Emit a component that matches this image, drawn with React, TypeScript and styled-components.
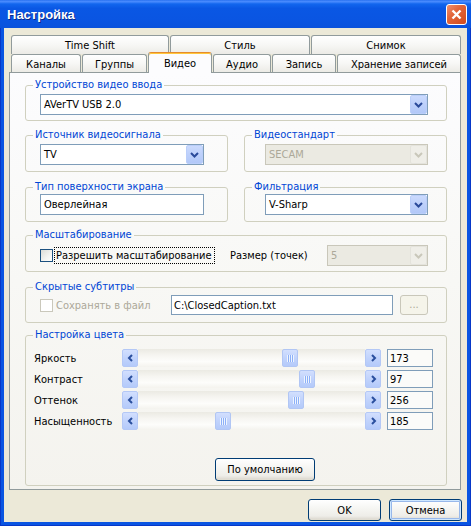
import React from "react";
import styled, { createGlobalStyle } from "styled-components";

const GlobalStyle = createGlobalStyle`
  html, body {
    margin: 0;
    padding: 0;
    background: #ffffff;
  }
  body {
    font-family: "DejaVu Sans Condensed", "DejaVu Sans", sans-serif;
    font-size: 11px;
    color: #000;
  }
  * {
    box-sizing: border-box;
  }
`;

const Window = styled.div`
  width: 471px;
  height: 526px;
  display: flex;
  flex-direction: column;
  background: #0a55e2;
  box-shadow: inset 1px 0 #0838c8, inset -1px 0 #0838c8, inset 0 -1px #0838c8;
`;

const TitleBar = styled.div`
  height: 28px;
  flex: none;
  display: flex;
  align-items: center;
  justify-content: space-between;
  padding: 0 4px 0 7px;
  background: linear-gradient(
    to bottom,
    #2a72f0 0%,
    #4a8cff 6%,
    #1266ee 14%,
    #0a57e4 30%,
    #0a55e2 70%,
    #0a52dc 100%
  );
`;

const Title = styled.span`
  font-family: "Liberation Sans", Arial, sans-serif;
  font-weight: bold;
  font-size: 13px;
  color: #ffffff;
  text-shadow: 1px 1px #0a2a8a;
`;

const CloseButton = styled.div`
  width: 21px;
  height: 21px;
  border: 1px solid #ffffff;
  border-radius: 3px;
  background: linear-gradient(135deg, #f09070 0%, #e2653a 40%, #d04a1c 100%);
  display: flex;
  align-items: center;
  justify-content: center;
`;

const Client = styled.div`
  flex: 1;
  margin: 0 4px 4px;
  background: #ece9d8;
  display: flex;
  flex-direction: column;
  padding: 7px 6px 0 5px;
`;

const TabRow = styled.div<{ $h: number }>`
  display: flex;
  align-items: flex-end;
  gap: 1px;
  height: ${({ $h }) => $h}px;
  padding-left: 2px;
`;

const Tab = styled.div<{ $w: number; $active?: boolean }>`
  width: ${({ $w }) => $w}px;
  height: ${({ $active }) => ($active ? "21px" : "100%")};
  margin-bottom: ${({ $active }) => ($active ? "-1px" : "0")};
  position: relative;
  z-index: ${({ $active }) => ($active ? 2 : 0)};
  display: flex;
  align-items: center;
  justify-content: center;
  border: 1px solid #919b9c;
  border-bottom: none;
  border-top-color: ${({ $active }) => ($active ? "#e68b2c" : "#919b9c")};
  border-radius: 3px 3px 0 0;
  background: ${({ $active }) =>
    $active
      ? "#fcfcfe"
      : "linear-gradient(to bottom, #ffffff 0%, #f7f7f5 50%, #ecebe6 100%)"};
  box-shadow: ${({ $active }) => ($active ? "inset 0 1px #ffc73c" : "none")};
  padding-top: ${({ $active }) => ($active ? "0" : "1px")};
`;

const Panel = styled.div`
  border: 1px solid #919b9c;
  background: linear-gradient(to bottom, #fcfcfe 0%, #f8f8f5 50%, #f4f3ee 100%);
  padding: 5px 13px 3px 15px;
  display: flex;
  flex-direction: column;
`;

const Pair = styled.div<{ $mt: number }>`
  display: grid;
  grid-template-columns: 203px 203px;
  column-gap: 16px;
  margin-top: ${({ $mt }) => $mt}px;
`;

const Group = styled.fieldset<{ $mt?: number }>`
  margin: ${({ $mt }) => $mt ?? 0}px 0 0 0;
  padding: 0;
  min-width: 0;
  border: 1px solid #d0d0bf;
  border-radius: 3px;
`;

const Legend = styled.legend`
  margin-left: 7px;
  padding: 0 2px;
  color: #0046d5;
  font-size: 11px;
  line-height: 14px;
`;

const GroupBody = styled.div<{ $pad: string }>`
  padding: ${({ $pad }) => $pad};
  display: flex;
  align-items: center;
`;

const Combo = styled.div<{ $w: number; $disabled?: boolean }>`
  width: ${({ $w }) => $w}px;
  height: 21px;
  display: flex;
  align-items: center;
  border: 1px solid ${({ $disabled }) => ($disabled ? "#c9c7ba" : "#7f9db9")};
  background: ${({ $disabled }) => ($disabled ? "#ebeae2" : "#ffffff")};
  color: ${({ $disabled }) => ($disabled ? "#aca899" : "#000")};
`;

const ComboText = styled.span`
  flex: 1;
  padding-left: 3px;
  white-space: nowrap;
`;

const DropButton = styled.div<{ $disabled?: boolean }>`
  width: 17px;
  height: 19px;
  display: flex;
  align-items: center;
  justify-content: center;
  border: 1px solid ${({ $disabled }) => ($disabled ? "#e4e3dc" : "#bacefa")};
  border-radius: 2px;
  background: ${({ $disabled }) =>
    $disabled
      ? "#efeee8"
      : "linear-gradient(to bottom, #cbdafd 0%, #bdd0fb 50%, #b2c8f8 100%)"};
`;

const TextBox = styled.div<{ $w: number; $h: number }>`
  width: ${({ $w }) => $w}px;
  height: ${({ $h }) => $h}px;
  display: flex;
  align-items: center;
  padding-left: 3px;
  border: 1px solid #7f9db9;
  background: #ffffff;
  white-space: nowrap;
`;

const CheckBox = styled.div<{ $disabled?: boolean }>`
  width: 13px;
  height: 13px;
  flex: none;
  border: 1px solid ${({ $disabled }) => ($disabled ? "#cac8bb" : "#1c5180")};
  background: ${({ $disabled }) =>
    $disabled ? "#ffffff" : "linear-gradient(135deg, #dcdcd7 0%, #f4f4f1 60%, #ffffff 100%)"};
`;

const CheckLabel = styled.span<{ $focus?: boolean; $disabled?: boolean }>`
  margin-left: 2px;
  padding: 1px 2px 1px 1px;
  line-height: 13px;
  outline: ${({ $focus }) => ($focus ? "1px dotted #000" : "none")};
  color: ${({ $disabled }) => ($disabled ? "#aca899" : "#000")};
  white-space: nowrap;
`;

const FieldLabel = styled.span<{ $w: number }>`
  width: ${({ $w }) => $w}px;
  margin-left: auto;
  white-space: nowrap;
`;

const SmallButton = styled.div`
  width: 28px;
  height: 20px;
  margin-left: 7px;
  border: 1px solid #c9c7ba;
  border-radius: 3px;
  background: #f5f4ea;
  color: #aca899;
  display: flex;
  align-items: center;
  justify-content: center;
  line-height: 10px;
`;

const ColorBody = styled.div`
  padding: 7px 0 4px 8px;
  display: flex;
  flex-direction: column;
`;

const SliderRow = styled.div`
  display: grid;
  grid-template-columns: 82px 259px 46px;
  column-gap: 6px;
  align-items: center;
  height: 18px;
  margin-bottom: 3px;
`;

const ScrollBar = styled.div`
  display: flex;
  height: 18px;
`;

const ScrollButton = styled.div`
  width: 16px;
  height: 18px;
  flex: none;
  display: flex;
  align-items: center;
  justify-content: center;
  border: 1px solid #b4c8f6;
  border-radius: 2px;
  background: linear-gradient(to bottom, #d2dffe 0%, #c1d3fc 50%, #b4cafa 100%);
`;

const Track = styled.div`
  flex: 1;
  display: flex;
  background: linear-gradient(
    to bottom,
    #ebeae3 0%,
    #f6f5f1 35%,
    #fdfdfb 70%,
    #f4f3ee 100%
  );
`;

const Thumb = styled.div`
  width: 16px;
  height: 18px;
  display: flex;
  align-items: center;
  justify-content: center;
  border: 1px solid #b1c6f4;
  border-radius: 2px;
  background: linear-gradient(to bottom, #d2dffe 0%, #c1d3fc 50%, #b4cafa 100%);
`;

const Grip = styled.div`
  width: 7px;
  height: 7px;
  background: repeating-linear-gradient(
    to right,
    #eef4fe 0 1px,
    #8cb0f8 1px 2px
  );
`;

const ValueBox = styled.div`
  height: 18px;
  border: 1px solid #7f9db9;
  padding-left: 2px;
  display: flex;
  align-items: center;
  background: #fbfbf9;
`;

const XpButton = styled.button<{ $w: number; $h: number; $focus?: boolean }>`
  width: ${({ $w }) => $w}px;
  height: ${({ $h }) => $h}px;
  padding: 0;
  font: inherit;
  font-size: 11px;
  color: #000;
  border: 1px solid #003c74;
  border-radius: 3px;
  background: linear-gradient(
    to bottom,
    #ffffff 0%,
    #f6f6f3 40%,
    #eeede8 80%,
    #d9d4ca 100%
  );
  box-shadow: ${({ $focus }) =>
    $focus
      ? "inset 0 0 0 1px #cee7ff, inset 0 0 0 2px #98b8ea"
      : "inset 0 -1px 0 #e0ddd2"};
`;

const DefaultButton = styled(XpButton)`
  margin: 25px 0 0 181px;
`;

const Footer = styled.div`
  display: flex;
  justify-content: flex-end;
  gap: 8px;
  margin: 9px -1px 0 0;
`;

function Chevron({ dir, color }: { dir: "down" | "left" | "right"; color: string }) {
  if (dir === "down") {
    return (
      <svg width="9" height="6" viewBox="0 0 9 6">
        <polyline points="1,1 4.5,4.5 8,1" fill="none" stroke={color} strokeWidth="2" />
      </svg>
    );
  }
  const pts = dir === "left" ? "5,1 2,4 5,7" : "2,1 5,4 2,7";
  return (
    <svg width="7" height="8" viewBox="0 0 7 8">
      <polyline points={pts} fill="none" stroke={color} strokeWidth="2" />
    </svg>
  );
}

function ComboBox({ w, value, disabled }: { w: number; value: string; disabled?: boolean }) {
  return (
    <Combo $w={w} $disabled={disabled}>
      <ComboText>{value}</ComboText>
      <DropButton $disabled={disabled}>
        <Chevron dir="down" color={disabled ? "#c9c7ba" : "#2a4a9a"} />
      </DropButton>
    </Combo>
  );
}

const topTabs: [string, number][] = [
  ["Time Shift", 158],
  ["Стиль", 140],
  ["Снимок", 150],
];

const bottomTabs: [string, number][] = [
  ["Каналы", 70],
  ["Группы", 65],
  ["Видео", 64],
  ["Аудио", 58],
  ["Запись", 64],
  ["Хранение записей", 124],
];

const colors = [
  { label: "Яркость", value: 173, pos: 144 },
  { label: "Контраст", value: 97, pos: 161 },
  { label: "Оттенок", value: 256, pos: 150 },
  { label: "Насыщенность", value: 185, pos: 77 },
];

export default function App() {
  return (
    <>
      <GlobalStyle />
      <Window>
        <TitleBar>
          <Title>Настройка</Title>
          <CloseButton>
            <svg width="11" height="11" viewBox="0 0 11 11">
              <path d="M1.5 1.5 L9.5 9.5 M9.5 1.5 L1.5 9.5" stroke="#fff" strokeWidth="2.4" />
            </svg>
          </CloseButton>
        </TitleBar>
        <Client>
          <TabRow $h={19}>
            {topTabs.map(([t, w]) => (
              <Tab key={t} $w={w}>
                {t}
              </Tab>
            ))}
          </TabRow>
          <TabRow $h={18}>
            {bottomTabs.map(([t, w]) => (
              <Tab key={t} $w={w} $active={t === "Видео"}>
                {t}
              </Tab>
            ))}
          </TabRow>
          <Panel>
            <Group>
              <Legend>Устройство видео ввода</Legend>
              <GroupBody $pad="2px 18px 5px 14px">
                <ComboBox w={388} value="AVerTV USB 2.0" />
              </GroupBody>
            </Group>

            <Pair $mt={7}>
              <Group>
                <Legend>Источник видеосигнала</Legend>
                <GroupBody $pad="2px 0 6px 14px">
                  <ComboBox w={164} value="TV" />
                </GroupBody>
              </Group>
              <Group>
                <Legend>Видеостандарт</Legend>
                <GroupBody $pad="2px 0 6px 20px">
                  <ComboBox w={163} value="SECAM" disabled />
                </GroupBody>
              </Group>
            </Pair>

            <Pair $mt={8}>
              <Group>
                <Legend>Тип поверхности экрана</Legend>
                <GroupBody $pad="0 0 6px 14px">
                  <TextBox $w={164} $h={21}>Оверлейная</TextBox>
                </GroupBody>
              </Group>
              <Group>
                <Legend>Фильтрация</Legend>
                <GroupBody $pad="0 0 6px 20px">
                  <ComboBox w={163} value="V-Sharp" />
                </GroupBody>
              </Group>
            </Pair>

            <Group $mt={6}>
              <Legend>Масштабирование</Legend>
              <GroupBody $pad="3px 18px 5px 14px">
                <CheckBox />
                <CheckLabel $focus>Разрешить масштабирование</CheckLabel>
                <FieldLabel $w={97}>Размер (точек)</FieldLabel>
                <ComboBox w={101} value="5" disabled />
              </GroupBody>
            </Group>

            <Group $mt={8}>
              <Legend>Скрытые субтитры</Legend>
              <GroupBody $pad="1px 18px 7px 14px">
                <CheckBox $disabled />
                <CheckLabel $disabled>Сохранять в файл</CheckLabel>
                <TextBox $w={222} $h={20} style={{ marginLeft: "auto", paddingLeft: 2 }}>
                  C:\ClosedCaption.txt
                </TextBox>
                <SmallButton>...</SmallButton>
              </GroupBody>
            </Group>

            <Group $mt={5}>
              <Legend>Настройка цвета</Legend>
              <ColorBody>
                {colors.map((c) => (
                  <SliderRow key={c.label}>
                    <span>{c.label}</span>
                    <ScrollBar>
                      <ScrollButton>
                        <Chevron dir="left" color="#2a4f9e" />
                      </ScrollButton>
                      <Track>
                        <Thumb style={{ marginLeft: c.pos }}>
                          <Grip />
                        </Thumb>
                      </Track>
                      <ScrollButton>
                        <Chevron dir="right" color="#2a4f9e" />
                      </ScrollButton>
                    </ScrollBar>
                    <ValueBox>{c.value}</ValueBox>
                  </SliderRow>
                ))}
                <DefaultButton $w={100} $h={23}>
                  По умолчанию
                </DefaultButton>
              </ColorBody>
            </Group>
          </Panel>
          <Footer>
            <XpButton $w={73} $h={22}>
              OK
            </XpButton>
            <XpButton $w={73} $h={22} $focus>
              Отмена
            </XpButton>
          </Footer>
        </Client>
      </Window>
    </>
  );
}
